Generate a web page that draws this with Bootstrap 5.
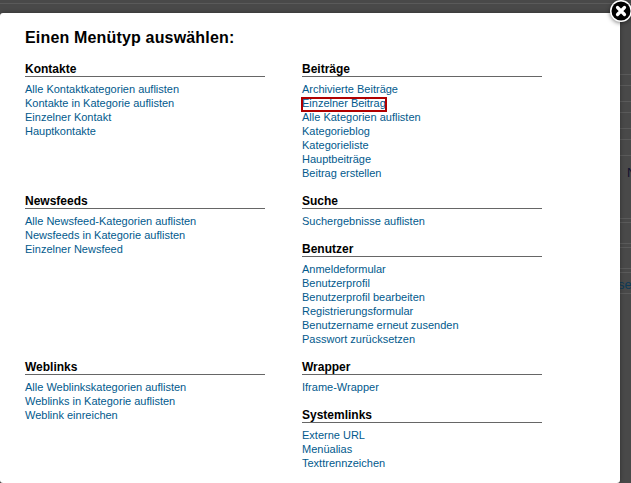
<!DOCTYPE html>
<html lang="de">
<head>
<meta charset="utf-8">
<title>Einen Menütyp auswählen</title>
<link href="https://cdn.jsdelivr.net/npm/bootstrap@5.3.0/dist/css/bootstrap.min.css" rel="stylesheet">
<style>
html,body{height:100%;overflow:hidden;}
body{background:#494949;font-family:"Liberation Sans",Arial,sans-serif;font-size:11px;line-height:14px;position:relative;width:631px;height:483px;}
.bgline{position:absolute;left:0;right:0;height:1px;background:#5a5a5a;}
.bgtext{position:absolute;font-size:13px;line-height:14px;}
.sheet{position:absolute;left:0;top:13px;width:620px;height:470px;background:#fff;padding:17px 25px 0;border-radius:3px;box-shadow:0 0 4px rgba(0,0,0,.35);}
.sheet-title{font-size:16px;font-weight:700;line-height:16px;margin:0;color:#000;letter-spacing:.17px;}
.menu-cols{margin-top:16px;gap:37px;}
.menu-col{width:240px;}
.grp-title{font-size:12px;font-weight:700;line-height:14px;color:#000;margin:0 0 5px;border-bottom:1px solid #666;height:15px;}
.grp-list{margin:0;padding:0;list-style:none;}
.grp-list a{color:#025a8d;text-decoration:none;display:inline-block;}
.grp-list a.is-active{position:relative;}
.grp-list a.is-active::after{content:"";position:absolute;left:-1px;right:-1px;top:1px;bottom:-2px;border:2px solid #b00000;}
.grp-1{margin-bottom:56px;}
.grp-2{margin-bottom:104px;}
.grp-3{margin-bottom:14px;}
.closer{position:absolute;left:609px;top:-1px;width:24px;height:24px;filter:drop-shadow(0 1px 2px rgba(0,0,0,.5));}
</style>
</head>
<body>
<div class="bgline" style="top:3px"></div>
<div class="bgline" style="top:74px"></div>
<div class="bgline" style="top:85px"></div>
<div class="bgline" style="top:101px"></div>
<div class="bgline" style="top:112px"></div>
<div class="bgline" style="top:128px"></div>
<div class="bgline" style="top:139px"></div>
<div class="bgline" style="top:155px"></div>
<div class="bgline" style="top:218px"></div>
<div class="bgline" style="top:222px"></div>
<div class="bgline" style="top:243px"></div>
<div class="bgline" style="top:247px"></div>
<div class="bgline" style="top:268px"></div>
<div class="bgline" style="top:272px"></div>
<div class="bgline" style="top:293px"></div>
<div class="bgtext" style="left:627px;top:166px;color:#10102e">N</div>
<div class="bgtext" style="left:618px;top:278px;color:#0d3a56">se</div>

<div class="sheet">
  <h1 class="sheet-title">Einen Menütyp auswählen:</h1>
  <div class="d-flex menu-cols">
    <div class="menu-col">
      <div class="grp-1">
        <h2 class="grp-title">Kontakte</h2>
        <ul class="grp-list">
          <li><a href="#">Alle Kontaktkategorien auflisten</a></li>
          <li><a href="#">Kontakte in Kategorie auflisten</a></li>
          <li><a href="#">Einzelner Kontakt</a></li>
          <li><a href="#">Hauptkontakte</a></li>
        </ul>
      </div>
      <div class="grp-2">
        <h2 class="grp-title">Newsfeeds</h2>
        <ul class="grp-list">
          <li><a href="#">Alle Newsfeed-Kategorien auflisten</a></li>
          <li><a href="#">Newsfeeds in Kategorie auflisten</a></li>
          <li><a href="#">Einzelner Newsfeed</a></li>
        </ul>
      </div>
      <div>
        <h2 class="grp-title">Weblinks</h2>
        <ul class="grp-list">
          <li><a href="#">Alle Weblinkskategorien auflisten</a></li>
          <li><a href="#">Weblinks in Kategorie auflisten</a></li>
          <li><a href="#">Weblink einreichen</a></li>
        </ul>
      </div>
    </div>
    <div class="menu-col">
      <div class="grp-3">
        <h2 class="grp-title">Beiträge</h2>
        <ul class="grp-list">
          <li><a href="#">Archivierte Beiträge</a></li>
          <li><a href="#" class="is-active">Einzelner Beitrag</a></li>
          <li><a href="#">Alle Kategorien auflisten</a></li>
          <li><a href="#">Kategorieblog</a></li>
          <li><a href="#">Kategorieliste</a></li>
          <li><a href="#">Hauptbeiträge</a></li>
          <li><a href="#">Beitrag erstellen</a></li>
        </ul>
      </div>
      <div class="grp-3">
        <h2 class="grp-title">Suche</h2>
        <ul class="grp-list">
          <li><a href="#">Suchergebnisse auflisten</a></li>
        </ul>
      </div>
      <div class="grp-3">
        <h2 class="grp-title">Benutzer</h2>
        <ul class="grp-list">
          <li><a href="#">Anmeldeformular</a></li>
          <li><a href="#">Benutzerprofil</a></li>
          <li><a href="#">Benutzerprofil bearbeiten</a></li>
          <li><a href="#">Registrierungsformular</a></li>
          <li><a href="#">Benutzername erneut zusenden</a></li>
          <li><a href="#">Passwort zurücksetzen</a></li>
        </ul>
      </div>
      <div class="grp-3">
        <h2 class="grp-title">Wrapper</h2>
        <ul class="grp-list">
          <li><a href="#">Iframe-Wrapper</a></li>
        </ul>
      </div>
      <div>
        <h2 class="grp-title">Systemlinks</h2>
        <ul class="grp-list">
          <li><a href="#">Externe URL</a></li>
          <li><a href="#">Menüalias</a></li>
          <li><a href="#">Texttrennzeichen</a></li>
        </ul>
      </div>
    </div>
  </div>
</div>
<svg class="closer" viewBox="0 0 24 24" aria-hidden="true">
  <circle cx="12" cy="12" r="11" fill="#fff"/>
  <circle cx="12" cy="12" r="9.5" fill="#000"/>
  <path d="M8.5 8.5 15.5 15.5M15.5 8.5 8.5 15.5" stroke="#fff" stroke-width="3.2" stroke-linecap="round"/>
</svg>
</body>
</html>
